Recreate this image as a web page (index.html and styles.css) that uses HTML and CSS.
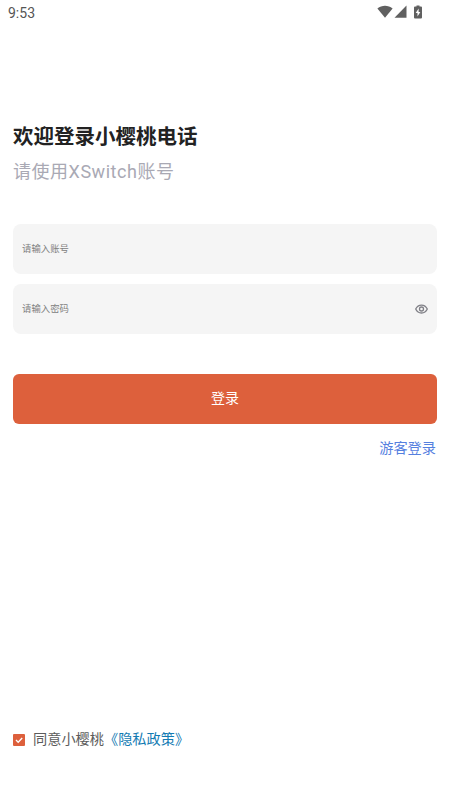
FILE: index.html
```html
<!DOCTYPE html>
<html lang="zh-CN">
<head>
<meta charset="utf-8">
<meta name="viewport" content="width=device-width, initial-scale=1">
<title>登录</title>
<link rel="stylesheet" href="styles.css">
</head>
<body>
<div class="screen">
  <header class="status">
    <span class="time">9:53</span>
    <span class="status-icons">
      <svg class="wifi" width="16" height="13" viewBox="0 0 16 13"><path d="M.4 3.5C4.8-.1 11.200-.1 15.600 3.500L8 12.700Z"/></svg>
      <svg class="signal" width="13" height="13" viewBox="0 0 13 13"><path d="M12.500.5V12.700H.5Z"/></svg>
      <svg class="battery" width="8" height="14" viewBox="0 0 8 14"><path d="M2.500.5h3v1H7a1 1 0 0 1 1 1V12.500a1 1 0 0 1-1 1H1a1 1 0 0 1-1-1V2.500a1 1 0 0 1 1-1h1.500Z"/><path class="bolt" d="M4.600 3.500 1.700 8h1.800v3.500L6.300 7H4.600Z"/></svg>
    </span>
  </header>
  <main class="login">
    <h1 class="title">欢迎登录小樱桃电话</h1>
    <p class="subtitle">请使用XSwitch账号</p>
    <div class="fields">
      <div class="field"><span>请输入账号</span></div>
      <div class="field">
        <span>请输入密码</span>
        <svg class="eye" width="13" height="10" viewBox="0 0 13 10"><path d="M.7 5C3.200-.3 9.800-.3 12.300 5C9.800 10.300 3.200 10.300.7 5Z"/><circle cx="6.500" cy="5" r="2"/></svg>
      </div>
    </div>
    <button class="submit" type="button">登录</button>
    <a class="guest">游客登录</a>
  </main>
  <footer class="agreement">
    <svg class="check" width="12" height="12" viewBox="0 0 12 12"><rect width="12" height="12" rx="1"/><path d="m3 6 2.200 2.200L9.200 4"/></svg>
    <span>同意小樱桃<a class="policy">《隐私政策》</a></span>
  </footer>
</div>
</body>
</html>
```

FILE: styles.css
```css
* { box-sizing: border-box; }
body {
  margin: 0;
  background: #fff;
  font-family: Roboto, "Noto Sans CJK SC", sans-serif;
}
.screen {
  display: flex;
  flex-direction: column;
  height: 800px;
  overflow: hidden;
}
.status {
  display: flex;
  justify-content: space-between;
  height: 26px;
  padding: 5px 28px 0 8px;
}
.time {
  color: #555;
  font-size: 14px;
  line-height: 16px;
}
.status-icons { display: flex; align-items: flex-start; fill: #606060; }
.signal { margin-left: 1px; }
.battery { margin-left: 7px; }
.bolt { fill: #fff; }
.login {
  display: flex;
  flex-direction: column;
  padding: 96px 13px 0;
}
.title {
  margin: 0;
  color: #222;
  font-size: 20.500px;
  font-weight: 700;
  line-height: 30px;
}
.subtitle {
  margin: 6px 0 0;
  color: #a9a9b4;
  font-size: 18px;
  letter-spacing: .53px;
  line-height: 27px;
}
.fields { display: grid; gap: 10px; margin-top: 39px; }
.field {
  display: flex;
  align-items: center;
  justify-content: space-between;
  height: 50px;
  padding: 0 9px;
  border-radius: 8px;
  background: #f5f5f5;
  color: #808080;
  font-size: 9.400px;
}
.field span { padding-bottom: 2px; }
.eye { fill: none; stroke: #808087; stroke-width: 1.300; }
.submit {
  height: 50px;
  margin-top: 40px;
  padding: 0 0 2px;
  border: 0;
  border-radius: 6px;
  background: #dd603c;
  color: #fff;
  font: 14px/48px Roboto, "Noto Sans CJK SC", sans-serif;
}
.guest {
  align-self: flex-end;
  margin: 14px 1px 0 0;
  color: #5580df;
  font-size: 14.200px;
  line-height: 21px;
}
.agreement {
  display: flex;
  align-items: center;
  height: 22px;
  margin: auto 0 49px 13px;
  color: #5c5c5c;
  font-size: 14.200px;
  line-height: 20px;
}
.agreement span { padding-bottom: 2px; }
.check { margin-right: 8px; fill: #dd603c; }
.check path { fill: none; stroke: #fff; stroke-width: 1.400; }
.policy { color: #147bb3; }
```
